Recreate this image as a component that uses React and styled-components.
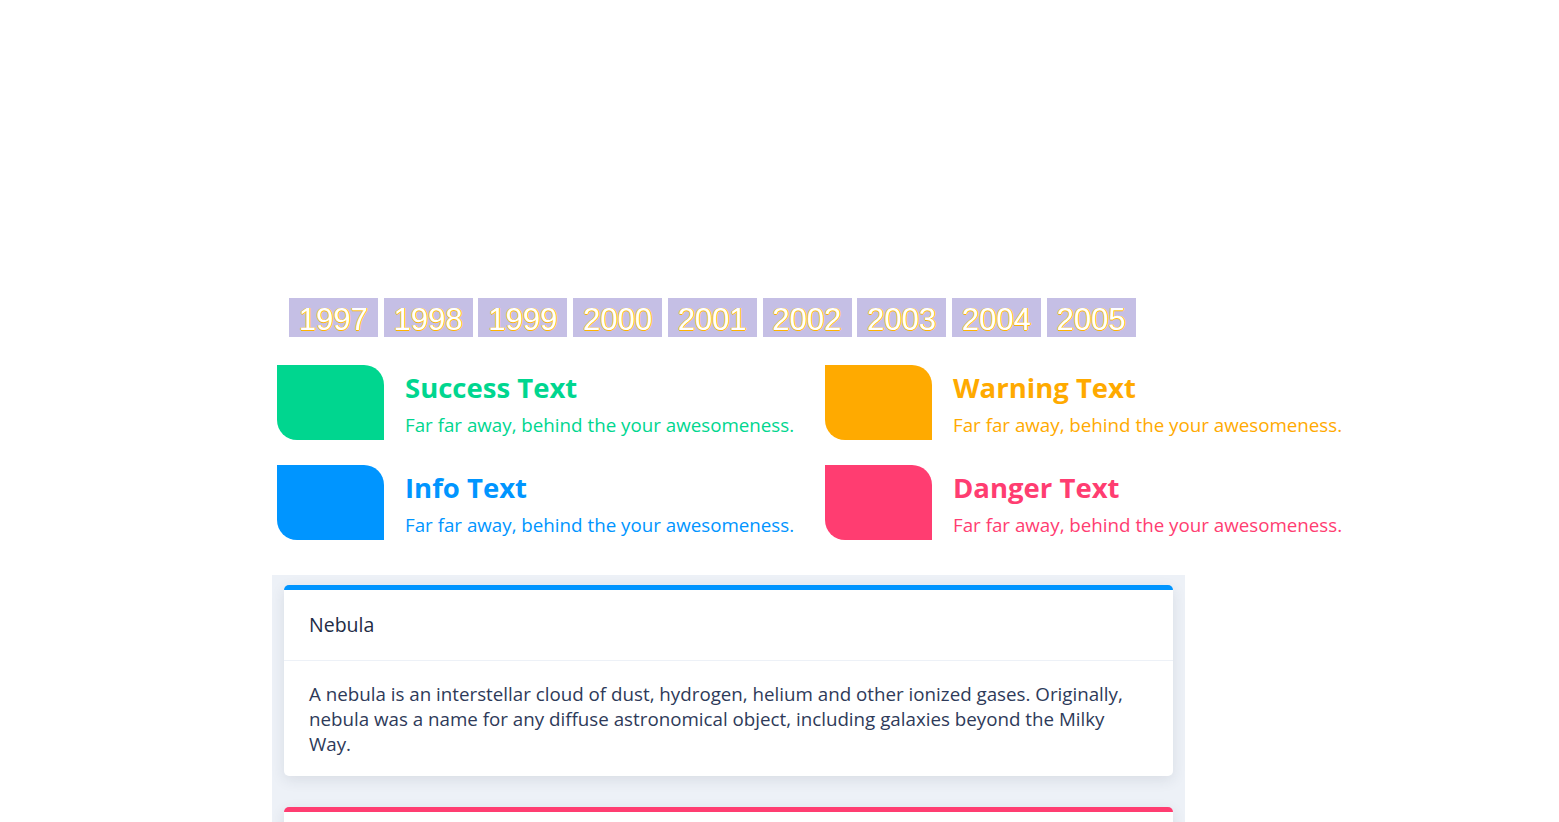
import React from 'react'
import styled, { createGlobalStyle } from 'styled-components'

const GlobalStyle = createGlobalStyle`
body {
  margin: 0;
  background: #ffffff;
  font-family: "Open Sans", "Noto Sans", sans-serif;
}
`

const Page = styled.div`
padding: 298px 0 0 277px;
width: 1282px;
`

const Years = styled.ul`
display: flex;
gap: 5.75px;
list-style: none;
margin: 0 0 28px 12px;
padding: 0;
`

const Year = styled.li`
height: 39px;
padding: 0 10px;
background-color: #c5bfe5;
color: #ffffff;
font-family: "Liberation Sans", Arial, sans-serif;
font-size: 31px;
line-height: 44px;
text-shadow: 1px 0 0 #ffc107, -1px 0 0 #ffd23a, 0 1px 0 #ffb300;
`

const StatusGrid = styled.div`
display: grid;
grid-template-columns: 548px 1fr;
row-gap: 25px;
`

const Status = styled.div`
display: flex;
align-items: flex-start;
color: ${(p) => p.color};
`

const Swatch = styled.div`
width: 107px;
height: 75px;
flex-shrink: 0;
background-color: ${(p) => p.color};
border-radius: 0 20px 0 20px;
`

const StatusBody = styled.div`
padding: 5px 0 0 21px;
`

const StatusTitle = styled.h3`
margin: 0;
font-size: 27.5px;
font-weight: 700;
line-height: 36px;
`

const StatusDesc = styled.p`
margin: 5px 0 0;
font-size: 18.75px;
line-height: 28px;
`

const Panel = styled.div`
margin: 35px 0 0 -5px;
width: 889px;
padding: 10px 12px 0;
background-color: #edf1f7;
display: flex;
flex-direction: column;
gap: 31px;
height: 237px;
overflow: hidden;
`

const Card = styled.div`
background: #ffffff;
border-top: 5px solid ${(p) => p.accent};
border-radius: 5px;
box-shadow: 0 4px 14px rgba(44, 51, 73, 0.1);
flex-shrink: 0;
min-height: 60px;
`

const CardHeader = styled.div`
padding: 22px 25px 23px;
border-bottom: 1px solid #edf1f7;
color: #222b45;
font-size: 19.5px;
font-weight: 500;
line-height: 25px;
`

const CardBody = styled.div`
padding: 20px 25px 20px;
color: #2e3a59;
font-size: 18.75px;
line-height: 25px;
`

const years = ['1997', '1998', '1999', '2000', '2001', '2002', '2003', '2004', '2005']

const statuses = [
  { title: 'Success Text', color: '#00d68f' },
  { title: 'Warning Text', color: '#ffaa00' },
  { title: 'Info Text', color: '#0095ff' },
  { title: 'Danger Text', color: '#ff3d71' },
]

export default function App() {
  return (
    <Page>
      <GlobalStyle />
      <Years>
        {years.map((y) => (
          <Year key={y}>{y}</Year>
        ))}
      </Years>
      <StatusGrid>
        {statuses.map((s) => (
          <Status key={s.title} color={s.color}>
            <Swatch color={s.color} />
            <StatusBody>
              <StatusTitle>{s.title}</StatusTitle>
              <StatusDesc>Far far away, behind the your awesomeness.</StatusDesc>
            </StatusBody>
          </Status>
        ))}
      </StatusGrid>
      <Panel>
        <Card accent="#0095ff">
          <CardHeader>Nebula</CardHeader>
          <CardBody>
            A nebula is an interstellar cloud of dust, hydrogen, helium and other ionized gases. Originally,
            nebula was a name for any diffuse astronomical object, including galaxies beyond the Milky Way.
          </CardBody>
        </Card>
        <Card accent="#ff3d71" />
      </Panel>
    </Page>
  )
}
